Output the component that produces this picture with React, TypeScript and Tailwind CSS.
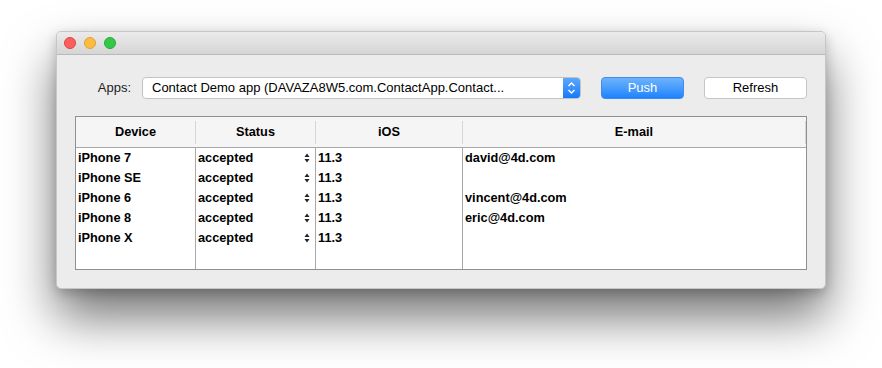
import React from 'react';

const devices = [
  { name: 'iPhone 7', status: 'accepted', ios: '11.3', email: 'david@4d.com' },
  { name: 'iPhone SE', status: 'accepted', ios: '11.3', email: '' },
  { name: 'iPhone 6', status: 'accepted', ios: '11.3', email: 'vincent@4d.com' },
  { name: 'iPhone 8', status: 'accepted', ios: '11.3', email: 'eric@4d.com' },
  { name: 'iPhone X', status: 'accepted', ios: '11.3', email: '' },
];

const font = { fontFamily: '"Liberation Sans", Arial, sans-serif' };

function Stepper() {
  return (
    <svg width="6" height="10" viewBox="0 0 6 10" aria-hidden="true">
      <path d="M3 0.5 L5.5 4 L0.5 4 Z" fill="#222" />
      <path d="M3 9.5 L5.5 6 L0.5 6 Z" fill="#222" />
    </svg>
  );
}

function Chevrons() {
  return (
    <svg width="9" height="14" viewBox="0 0 9 14" aria-hidden="true">
      <path d="M1.5 5 L4.5 2 L7.5 5" fill="none" stroke="#fff" strokeWidth="1.4" />
      <path d="M1.5 9 L4.5 12 L7.5 9" fill="none" stroke="#fff" strokeWidth="1.4" />
    </svg>
  );
}

function TrafficLight({ color, border }: { color: string; border: string }) {
  return <span className={`h-3 w-3 rounded-full border ${color} ${border}`} />;
}

export default function App() {
  return (
    <div className="min-h-[368px] w-[882px] bg-white pl-[56px] pt-[31px]" style={font}>
      <div className="w-[770px] overflow-hidden rounded-[5px] border border-[#c6c6c6] bg-[#ececec] shadow-[0_28px_50px_rgba(0,0,0,0.55),0_4px_12px_rgba(0,0,0,0.2)]">
        {/* title bar */}
        <div className="flex h-[23px] items-center gap-2 border-b border-[#b9b9b9] bg-gradient-to-b from-[#ebebeb] to-[#d5d5d5] pl-[7px]">
          <TrafficLight color="bg-[#fc605c]" border="border-[#e0443e]" />
          <TrafficLight color="bg-[#fdbc40]" border="border-[#dea236]" />
          <TrafficLight color="bg-[#34c84a]" border="border-[#27aa35]" />
        </div>

        <div className="px-[18px] pb-[18px] pt-[22px]">
          {/* toolbar row */}
          <div className="flex h-[22px] items-center">
            <span className="w-[57px] pr-[1px] text-right text-[13px] text-[#222]">Apps:</span>
            <div className="ml-[10px] flex h-[22px] w-[439px] items-center overflow-hidden rounded-[4px] border border-[#c3c3c3] bg-white">
              <span className="flex-1 truncate pl-[9px] text-[13px] text-black">
                Contact Demo app (DAVAZA8W5.com.ContactApp.Contact...
              </span>
              <span className="flex h-full w-[17px] items-center justify-center bg-gradient-to-b from-[#5aa8fb] to-[#1479fd]">
                <Chevrons />
              </span>
            </div>
            <button className="ml-[20px] h-[22px] w-[83px] rounded-[4px] border border-[#3f8cf0] bg-gradient-to-b from-[#6bb3fb] to-[#1a83fd] text-[13px] text-white">
              Push
            </button>
            <button className="ml-[20px] h-[22px] w-[103px] rounded-[4px] border border-[#c5c5c5] bg-white text-[13px] text-black">
              Refresh
            </button>
          </div>

          {/* table */}
          <div className="mt-[17px] border border-[#8f8f8f] bg-white text-[12.75px] font-bold text-black">
            <div className="flex h-[31px] items-center border-b border-[#a8a8a8] bg-[#f5f5f5]">
              <div className="w-[119px] text-center">Device</div>
              <div className="h-[23px] w-px bg-[#d6d6d6]" />
              <div className="w-[119px] text-center">Status</div>
              <div className="h-[23px] w-px bg-[#d6d6d6]" />
              <div className="w-[146px] text-center">iOS</div>
              <div className="h-[23px] w-px bg-[#d6d6d6]" />
              <div className="flex-1 text-center">E-mail</div>
              <div className="h-[23px] w-px bg-[#d6d6d6]" />
            </div>
            <div className="flex h-[121px]">
              <div className="w-[120px] border-r border-[#a8a8a8] pl-[2px]">
                {devices.map((d) => (
                  <div key={d.name} className="h-[20px] leading-[20px]">{d.name}</div>
                ))}
              </div>
              <div className="w-[120px] border-r border-[#a8a8a8] pl-[2px]">
                {devices.map((d) => (
                  <div key={d.name} className="flex h-[20px] items-center justify-between pr-[5px] leading-[20px]">
                    <span>{d.status}</span>
                    <Stepper />
                  </div>
                ))}
              </div>
              <div className="w-[147px] border-r border-[#a8a8a8] pl-[2px]">
                {devices.map((d) => (
                  <div key={d.name} className="h-[20px] leading-[20px]">{d.ios}</div>
                ))}
              </div>
              <div className="flex-1 pl-[2px]">
                {devices.map((d) => (
                  <div key={d.name} className="h-[20px] leading-[20px]">{d.email}</div>
                ))}
              </div>
            </div>
          </div>
        </div>
      </div>
    </div>
  );
}
